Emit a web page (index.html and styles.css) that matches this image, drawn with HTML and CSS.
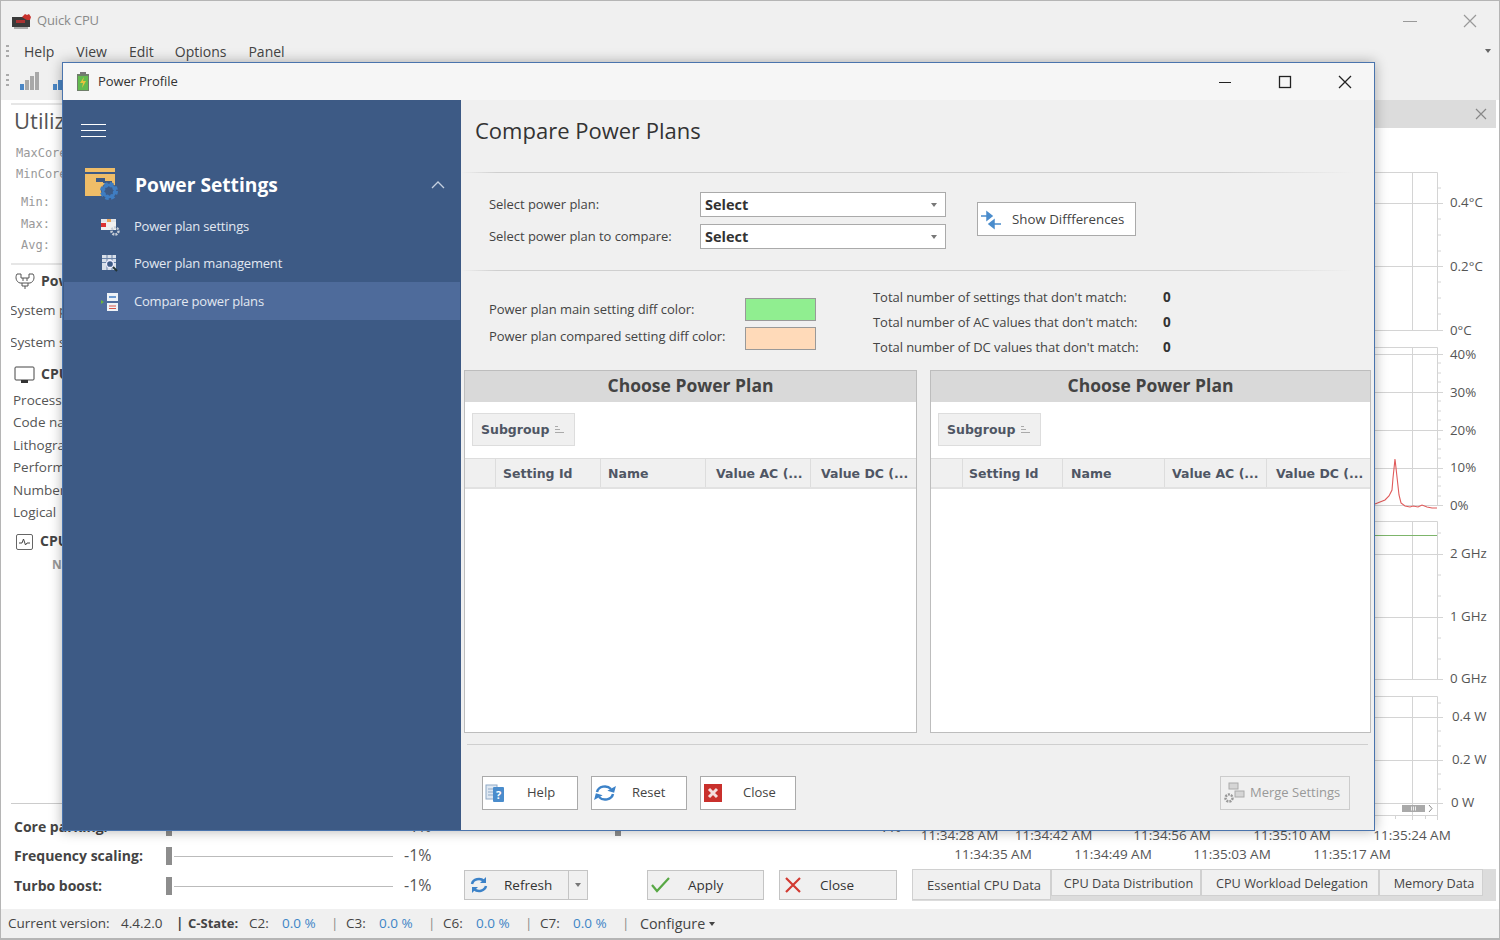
FILE: index.html
```html
<!DOCTYPE html>
<html lang="en">
<head>
<meta charset="utf-8">
<title>Quick CPU - Power Profile</title>
<link rel="stylesheet" href="styles.css">
</head>
<body>
<div class="app">
  <header class="titlebar">
    <svg class="logo" width="22" height="18" viewBox="0 0 22 18"><rect x="1" y="5" width="18" height="10" fill="#3a3a3a"/><path d="M11 5l3-3 2 1 2-1 2 3-1 3-3 0-2-1z" fill="#c8322d"/><rect x="5" y="8" width="9" height="3" fill="#a33"/><rect x="3" y="15" width="14" height="2" fill="#aaa"/></svg>
    <span class="app-name">Quick CPU</span>
    <span class="spacer"></span>
    <svg class="win-ctl" width="14" height="14" viewBox="0 0 14 14"><path d="M0 7.5h14" stroke="#999" fill="none"/></svg>
    <svg class="win-ctl close-ctl" width="14" height="14" viewBox="0 0 14 14"><path d="M1 1l12 12M13 1L1 13" stroke="#999" stroke-width="1.2" fill="none"/></svg>
  </header>
  <nav class="menubar">
    <span class="grip"></span>
    <span class="menu">Help</span><span class="menu">View</span><span class="menu m-edit">Edit</span><span class="menu">Options</span><span class="menu">Panel</span>
    <span class="spacer"></span><span class="bar-caret"></span>
  </nav>
  <div class="toolbar">
    <span class="grip"></span>
    <svg width="20" height="20" viewBox="0 0 20 20"><rect x="0" y="13" width="4" height="6" fill="#4a86c5"/><rect x="5" y="9" width="4" height="10" fill="#a8a8a8"/><rect x="10" y="5" width="4" height="14" fill="#a8a8a8"/><rect x="15" y="1" width="4" height="18" fill="#a8a8a8"/></svg>
    <svg class="tool2" width="20" height="20" viewBox="0 0 20 20"><rect x="0" y="13" width="4" height="6" fill="#4a86c5"/><rect x="5" y="9" width="4" height="10" fill="#4a86c5"/><rect x="10" y="5" width="4" height="14" fill="#a8a8a8"/></svg>
  </div>

  <main class="work">
    <section class="left-col">
      <div class="info">
        <div class="util-box">
          <div class="util-title">Utilization</div>
          <div class="mono mono-a">MaxCore:</div>
          <div class="mono mono-b">MinCore:</div>
          <div class="mono mono-c">Min:</div>
          <div class="mono mono-c">Max:</div>
          <div class="mono mono-c">Avg:</div>
        </div>
        <div class="sec-head sec-power">
          <svg width="22" height="18" viewBox="0 0 22 18"><path d="M3 2h4v4h8V2h4c2 3 1 8-3 9H6C2 10 1 5 3 2z" fill="none" stroke="#555"/><path d="M8 11v3h6v-3M11 14v3M9 6v3M13 6v3" fill="none" stroke="#555"/></svg>
          <b>Power</b>
        </div>
        <div class="row row-sys">System power</div>
        <div class="row row-sys">System state</div>
        <div class="sec-head sec-cpu">
          <svg width="22" height="18" viewBox="0 0 22 18"><rect x="1" y="1" width="19" height="13" rx="1" fill="#fff" stroke="#444"/><rect x="7" y="14" width="7" height="3" fill="#333"/></svg>
          <b>CPU</b>
        </div>
        <div class="row row-cpu">Processor</div>
        <div class="row row-cpu">Code name</div>
        <div class="row row-cpu">Lithography</div>
        <div class="row row-cpu">Performance</div>
        <div class="row row-cpu">Number</div>
        <div class="row row-cpu">Logical</div>
        <div class="sec-head sec-cpu2">
          <svg width="20" height="18" viewBox="0 0 20 18"><rect x="1.500" y="1.500" width="16" height="15" rx="1.500" fill="#fff" stroke="#666"/><path d="M4 10h3l1.500-4 2 6 1.500-2h3" fill="none" stroke="#444"/></svg>
          <b>CPU</b>
        </div>
        <div class="row-name">Name</div>
      </div>
      <div class="controls">
        <div class="ctl-row ctl-first">
          <b class="ctl-label">Core parking:</b>
          <span class="slider"><i class="thumb"></i><i class="track"></i></span><span class="ctl-val">-1%</span>
          <b class="perf-label">Performance:</b>
          <span class="slider slider-b"><i class="thumb"></i><i class="track"></i></span><span class="ctl-val">-1%</span>
        </div>
        <div class="ctl-row">
          <b class="ctl-label">Frequency scaling:</b>
          <span class="slider"><i class="thumb"></i><i class="track"></i></span><span class="ctl-val">-1%</span>
        </div>
        <div class="ctl-row">
          <b class="ctl-label">Turbo boost:</b>
          <span class="slider"><i class="thumb"></i><i class="track"></i></span><span class="ctl-val">-1%</span>
          <div class="actions">
            <div class="act act-refresh">
              <span class="act-main">
                <svg width="18" height="18" viewBox="0 0 18 18"><path d="M2 8a7 6 0 0 1 12-3" fill="none" stroke="#3c82c8" stroke-width="2.500"/><path d="M16 1v6h-6z" fill="#3c82c8"/><path d="M16 10a7 6 0 0 1-12 3" fill="none" stroke="#3c82c8" stroke-width="2.500"/><path d="M2 17v-6h6z" fill="#3c82c8"/></svg>
                <span class="act-text">Refresh</span>
              </span>
              <span class="act-drop"><i class="caret"></i></span>
            </div>
            <div class="act act-apply">
              <svg width="22" height="18" viewBox="0 0 22 18"><path d="M2 9l5 6L19 2" fill="none" stroke="#58a845" stroke-width="2.200"/></svg>
              <span class="act-text">Apply</span>
            </div>
            <div class="act act-close">
              <svg width="18" height="18" viewBox="0 0 18 18"><path d="M2 2l14 14M16 2L2 16" fill="none" stroke="#d23a32" stroke-width="2.200"/></svg>
              <span class="act-text">Close</span>
            </div>
          </div>
        </div>
      </div>
    </section>

    <section class="right-col">
      <div class="chart-head">
        <svg width="12" height="12" viewBox="0 0 12 12"><path d="M1 1l10 10M11 1L1 11" stroke="#888" stroke-width="1.200" fill="none"/></svg>
      </div>
      <svg class="chart" width="588" height="738" viewBox="912 128 588 738">
        <g class="grid">
          <path d="M1000 172.500H1437.500V330.500H1000M1412.500 172V330"/>
          <path d="M1000 203.500H1443M1000 266.500H1443M1437 330.500H1443"/>
          <path d="M1000 347.500H1437.500V505.500H1000M1412.500 347V505"/>
          <path d="M1000 354.500H1443M1000 392.500H1443M1000 430.500H1443M1000 468.500H1443M1000 505.500H1443"/>
          <path d="M1000 521.500H1437.500V679.500H1000M1412.500 521V679"/>
          <path d="M1000 554.500H1443M1000 617.500H1443M1437 679.500H1443"/>
          <path d="M1000 696.500H1437.500V803.500H1000M1412.500 696V815"/>
          <path d="M1000 717.500H1443M1000 760.500H1443M1437 803.500H1443"/>
          <path d="M1000 815.500H1437.500M1437.500 803V820M1395.500 815V819M1412.500 815V820M1425.500 815V819"/>
        </g>
        <path class="minor" d="M1437 188h4M1437 219h4M1437 235h4M1437 251h4M1437 282h4M1437 298h4M1437 314h4M1437 363h4M1437 373h4M1437 382h4M1437 401h4M1437 411h4M1437 420h4M1437 439h4M1437 449h4M1437 458h4M1437 477h4M1437 486h4M1437 496h4M1437 533h4M1437 575h4M1437 596h4M1437 638h4M1437 659h4M1437 703h4M1437 731h4M1437 746h4M1437 774h4M1437 789h4"/>
        <path class="green" d="M1000 535.500H1437"/>
        <path class="red" d="M1375 504l5-2 5-2 4-4 3-6 1-12 2-19 2 18 2 18 2 8 4 3 5 1 3-1 5 1 4-2 5 2 5 1h5"/>
        <rect class="sb-thumb" x="1402" y="805" width="23" height="7"/>
        <path class="sb-lines" d="M1411.500 806.500v4M1413.500 806.500v4M1415.500 806.500v4"/>
        <path class="sb-arrow" d="M1429 805l3 3.500-3 3.500"/>
        <g class="axis">
          <text x="1450" y="207">0.4°C</text><text x="1450" y="271">0.2°C</text><text x="1450" y="335">0°C</text>
          <text x="1450" y="359">40%</text><text x="1450" y="397">30%</text><text x="1450" y="435">20%</text><text x="1450" y="472">10%</text><text x="1450" y="510">0%</text>
          <text x="1450" y="558">2 GHz</text><text x="1450" y="621">1 GHz</text><text x="1450" y="683">0 GHz</text>
          <text x="1452" y="721">0.4 W</text><text x="1452" y="764">0.2 W</text><text x="1451" y="807">0 W</text>
        </g>
        <g class="times">
          <text x="959.500" y="840">11:34:28 AM</text><text x="1053.500" y="840">11:34:42 AM</text><text x="1172" y="840">11:34:56 AM</text><text x="1292" y="840">11:35:10 AM</text><text x="1412" y="840">11:35:24 AM</text>
          <text x="993" y="859">11:34:35 AM</text><text x="1113" y="859">11:34:49 AM</text><text x="1232" y="859">11:35:03 AM</text><text x="1352" y="859">11:35:17 AM</text>
        </g>
      </svg>
      <div class="tabs">
        <span class="tab tab-on">Essential CPU Data</span>
        <span class="tab tab-b">CPU Data Distribution</span>
        <span class="tab tab-c">CPU Workload Delegation</span>
        <span class="tab tab-d">Memory Data</span>
      </div>
    </section>
  </main>

  <footer class="status">
    <span class="st-cur">Current version:</span><span class="st-ver">4.4.2.0</span>
    <b class="st-bar">|</b><b class="st-cs">C-State:</b>
    <span class="st-k">C2:</span><span class="st-v">0.0 %</span><span class="st-sep">|</span>
    <span class="st-k">C3:</span><span class="st-v">0.0 %</span><span class="st-sep">|</span>
    <span class="st-k">C6:</span><span class="st-v">0.0 %</span><span class="st-sep">|</span>
    <span class="st-k">C7:</span><span class="st-v">0.0 %</span><span class="st-sep st-last">|</span>
    <span class="st-conf">Configure</span><i class="caret caret-dark"></i>
  </footer>
</div>

<div class="dialog">
  <header class="dlg-title">
    <svg width="14" height="20" viewBox="0 0 14 20"><rect x="4" y="0" width="6" height="3" fill="#777"/><rect x="1" y="2" width="12" height="17" fill="#6f7f6a"/><rect x="2" y="4" width="10" height="14" fill="#63bb4f"/><path d="M8 5L4 11h3l-1 5 4-7H7z" fill="#e8c43c"/></svg>
    <span class="dlg-name">Power Profile</span>
    <span class="spacer"></span>
    <svg class="dlg-btn" width="14" height="14" viewBox="0 0 14 14"><path d="M1 7.500h12" stroke="#222" fill="none"/></svg>
    <svg class="dlg-btn" width="14" height="14" viewBox="0 0 14 14"><rect x="1.500" y="1.500" width="11" height="11" stroke="#222" stroke-width="1.300" fill="none"/></svg>
    <svg class="dlg-btn" width="14" height="14" viewBox="0 0 14 14"><path d="M1 1l12 12M13 1L1 13" stroke="#222" stroke-width="1.300" fill="none"/></svg>
  </header>
  <div class="dlg-body">
    <aside class="side">
      <div class="burger"><i></i><i></i><i></i></div>
      <div class="side-head">
        <svg width="38" height="36" viewBox="0 0 38 36"><rect x="1" y="1" width="30" height="28" fill="#efbd68"/><rect x="1" y="5" width="30" height="2" fill="#3d5a85"/><rect x="12" y="11" width="9" height="4" fill="#3d5a85"/><path d="M19 15h8v6" fill="none" stroke="#3d5a85" stroke-width="2"/><circle cx="25" cy="24" r="8" fill="#3d5a85"/><circle cx="25" cy="24" r="6.500" fill="none" stroke="#3f7dc2" stroke-width="5" stroke-dasharray="3 2.100"/><circle cx="25" cy="24" r="6" fill="none" stroke="#3f7dc2" stroke-width="2.500"/></svg>
        <span class="side-title">Power Settings</span>
        <span class="spacer"></span>
        <svg class="chev" width="14" height="8" viewBox="0 0 14 8"><path d="M1 7l6-6 6 6" fill="none" stroke="#c5d0e0" stroke-width="1.300"/></svg>
      </div>
      <div class="side-item">
        <svg width="20" height="20" viewBox="0 0 20 20"><rect x="1" y="2" width="15" height="11" fill="#f0f0f0"/><rect x="1" y="2" width="15" height="3" fill="#e0e4ea"/><rect x="1" y="6" width="5" height="4" fill="#d33"/><rect x="7" y="2" width="4" height="3" fill="#e9a35a"/><circle cx="15" cy="14" r="3.500" fill="none" stroke="#c5ccd6" stroke-width="2.500" stroke-dasharray="2 1"/></svg>
        <span>Power plan settings</span>
      </div>
      <div class="side-item">
        <svg width="20" height="20" viewBox="0 0 20 20"><rect x="2" y="1" width="14" height="15" fill="#d8dfe9"/><path d="M2 4.500h14M2 8.500h14M7 1v15M12 1v15" stroke="#6a83a8"/><circle cx="10" cy="10" r="3.500" fill="#3d5a85" stroke="#eef" stroke-width="1.300"/><path d="M13 13l4 4" stroke="#233" stroke-width="2"/></svg>
        <span>Power plan management</span>
      </div>
      <div class="side-item side-on">
        <svg width="20" height="20" viewBox="0 0 20 20"><rect x="7" y="1" width="11" height="8" fill="#eef2f7"/><rect x="9" y="4" width="7" height="2" fill="#6d9ad0"/><rect x="7" y="11" width="11" height="8" fill="#eef2f7"/><path d="M9 14h7M9 16.500h7" stroke="#d8564a"/><path d="M1 8l3 2-3 2z" fill="#6bb33c"/></svg>
        <span>Compare power plans</span>
      </div>
    </aside>
    <div class="pane">
      <h1 class="pane-title">Compare Power Plans</h1>
      <div class="rule"></div>
      <div class="select-form">
        <div class="select-grid">
          <label class="flabel">Select power plan:</label>
          <div class="combo"><b>Select</b><i class="caret"></i></div>
          <label class="flabel">Select power plan to compare:</label>
          <div class="combo"><b>Select</b><i class="caret"></i></div>
        </div>
        <div class="btn btn-diff">
          <svg width="22" height="20" viewBox="0 0 22 20"><path d="M1 6h8M7 2l5 4-5 4z" fill="#4a8ccc" stroke="#4a8ccc" stroke-width="1.500"/><path d="M21 14h-9M14 10l-5 4 5 4z" fill="#4a8ccc" stroke="#4a8ccc" stroke-width="1.500"/></svg>
          <span>Show Diffferences</span>
        </div>
      </div>
      <div class="rule"></div>
      <div class="diff-row">
        <div class="swatches">
          <span class="flabel fl-up">Power plan main setting diff color:</span><i class="swatch sw-green"></i>
          <span class="flabel fl-down">Power plan compared setting diff color:</span><i class="swatch sw-peach"></i>
        </div>
        <div class="totals">
          <span class="flabel">Total number of settings that don't match:</span><b>0</b>
          <span class="flabel">Total number of AC values that don't match:</span><b>0</b>
          <span class="flabel">Total number of DC values that don't match:</span><b>0</b>
        </div>
      </div>
      <div class="panels">
        <section class="plan plan-l">
          <h2 class="plan-head">Choose Power Plan</h2>
          <div class="group-area"><span class="chip">Subgroup<svg width="11" height="10" viewBox="0 0 11 10"><path d="M1 1.500h3M1 4.500h5M1 7.500h9" stroke="#aaa" fill="none"/></svg></span></div>
          <div class="cols">
            <span></span><span>Setting Id</span><span>Name</span><span>Value AC (...</span><span>Value DC (...</span>
          </div>
        </section>
        <section class="plan plan-r">
          <h2 class="plan-head">Choose Power Plan</h2>
          <div class="group-area"><span class="chip">Subgroup<svg width="11" height="10" viewBox="0 0 11 10"><path d="M1 1.500h3M1 4.500h5M1 7.500h9" stroke="#aaa" fill="none"/></svg></span></div>
          <div class="cols">
            <span></span><span>Setting Id</span><span>Name</span><span>Value AC (...</span><span>Value DC (...</span>
          </div>
        </section>
      </div>
      <div class="rule rule-foot"></div>
      <div class="foot">
        <div class="btn btn-foot">
          <svg width="22" height="22" viewBox="0 0 22 22"><rect x="1" y="3" width="11" height="14" fill="#dfe8f2" stroke="#8fa9c6"/><path d="M3 7h7M3 10h7M3 13h7" stroke="#8fa9c6"/><rect x="8" y="5" width="11" height="15" rx="1" fill="#4a8ccc"/><text class="q" x="13.500" y="16.500">?</text></svg>
          <span>Help</span>
        </div>
        <div class="btn btn-foot btn-reset">
          <svg width="22" height="20" viewBox="0 0 22 20"><path d="M3 9a8 7 0 0 1 14-3" fill="none" stroke="#3c82c8" stroke-width="2.500"/><path d="M21 2v7h-7z" fill="#3c82c8" transform="rotate(15 18 6)"/><path d="M19 11a8 7 0 0 1-14 3" fill="none" stroke="#3c82c8" stroke-width="2.500"/><path d="M1 18v-7h7z" fill="#3c82c8" transform="rotate(15 4 14)"/></svg>
          <span>Reset</span>
        </div>
        <div class="btn btn-foot">
          <svg width="20" height="20" viewBox="0 0 20 20"><rect x="1" y="1" width="18" height="18" fill="#c9302c"/><path d="M6 6l8 8M14 6l-8 8" stroke="#f4dede" stroke-width="3"/></svg>
          <span>Close</span>
        </div>
        <span class="spacer"></span>
        <div class="btn btn-merge">
          <svg width="22" height="22" viewBox="0 0 22 22"><rect x="6" y="1" width="9" height="6" fill="#d5d5d5" stroke="#aaa"/><rect x="12" y="9" width="9" height="6" fill="#d5d5d5" stroke="#aaa"/><circle cx="6" cy="16" r="3.500" fill="none" stroke="#999" stroke-width="2.500" stroke-dasharray="2 1"/></svg>
          <span>Merge Settings</span>
        </div>
      </div>
    </div>
  </div>
</div>
</body>
</html>
```

FILE: styles.css
```css
* { box-sizing: border-box; }
html, body { margin: 0; padding: 0; }
body {
  width: 1500px; height: 940px; overflow: hidden; position: relative;
  background: #f0f0f0; color: #444;
  font: 13px/1.2 "Open Sans", "Noto Sans", sans-serif;
}
i { display: block; font-style: normal; }
.spacer { flex: 1; }

.app {
  width: 1500px; height: 940px; display: flex; flex-direction: column;
  border: 1px solid #b5b5b5; border-width: 1px 1px 2px 1px;
}
.titlebar { height: 39px; display: flex; align-items: center; padding-left: 10px; }
.logo { margin-right: 4px; }
.app-name { font-size: 13px; letter-spacing: -.15px; color: #8a8a8a; }
.win-ctl { margin-right: 22px; }
.close-ctl { margin-left: 24px; margin-right: 22px; }

.menubar { height: 24px; display: flex; align-items: center; padding-left: 5px; }
.grip { width: 3px; height: 14px; margin-right: 15px; background: repeating-linear-gradient(#aaa 0 2px, transparent 2px 5px); }
.menu { font-size: 14px; color: #444; margin-right: 22px; }
.m-edit { margin-right: 21px; }
.bar-caret { width: 0; height: 0; margin-right: 8px; border: 3px solid transparent; border-top: 4px solid #666; }

.toolbar { height: 36px; display: flex; align-items: center; padding-left: 5px; padding-bottom: 2px; }
.toolbar .grip { margin-right: 11px; }
.tool2 { margin-left: 13px; }

.work { flex: 1; display: flex; background: #fff; }
.left-col { width: 911px; display: flex; flex-direction: column; }
.info { height: 704px; margin-left: 10px; border-bottom: 1px solid #ccc; overflow: hidden; color: #444; }
.util-box { margin: 3px 0 0 -2px; height: 162px; width: 300px; padding-left: 3px; border: 2px solid #e6e6e6; }
.util-title { font-size: 22px; line-height: 30px; color: #555; }
.mono { font: 12px/16px "DejaVu Sans Mono", monospace; color: #999; margin-left: 2px; }
.mono-a { margin-top: 10px; }
.mono-b { margin-top: 5px; }
.mono-c { margin: 5.500px 0 0 7px; }
.mono-b + .mono-c { margin-top: 12px; }
.sec-head { display: flex; align-items: center; gap: 5px; height: 20px; margin-left: 3px; color: #444; font-size: 14px; }
.sec-power { margin-top: 6px; }
.sec-cpu { margin-top: 11px; }
.sec-cpu2 { margin-top: 8px; margin-left: 4px; }
.row { height: 22.500px; line-height: 22.500px; color: #555; font-size: 13.500px; }
.row-sys { margin-top: 8px; margin-left: -1px; }
.row-sys + .row-sys { margin-top: 9.500px; }
.row-cpu { margin-left: 2px; }
.sec-cpu + .row-cpu { margin-top: 4px; }
.row-name { margin: 6px 0 0 41px; color: #999; font-weight: 700; font-size: 12px; }

.controls { padding: 6px 0 0 13px; }
.ctl-row { height: 30px; display: flex; align-items: center; }
.ctl-row > * { flex: none; }
.ctl-first { height: 31px; padding-top: 3px; }
.ctl-label { width: 152px; font-size: 14px; color: #444; }
.slider { width: 227px; height: 18px; display: flex; align-items: center; }
.thumb { width: 6px; height: 18px; background: #8d8d8d; }
.track { flex: 1; height: 1px; background: #bbb; margin-left: 2px; }
.ctl-val { margin-left: 11px; font-size: 16px; width: 50px; color: #555; }
.perf-label { width: 150px; margin-left: 6px; }
.slider-b { width: 248px; margin-left: 5px; }
.actions { display: flex; margin: -2px 0 0 10px; height: 30px; }
.act { height: 30px; border: 1px solid #c4c4c4; background: #f0f0f0; display: flex; align-items: center; color: #333; font-size: 13.500px; }
.act-main { display: flex; align-items: center; flex: 1; height: 100%; padding-left: 5px; }
.act-refresh { width: 124px; }
.act-refresh .act-text { margin-left: 16px; }
.act-drop { width: 19px; height: 100%; border-left: 1px solid #c4c4c4; display: flex; align-items: center; justify-content: center; }
.act-apply { width: 117px; margin-left: 59px; padding-left: 2px; }
.act-apply .act-text { margin-left: 16px; }
.act-close { width: 118px; margin-left: 15px; padding-left: 4px; }
.act-close .act-text { margin-left: 18px; }
.caret { width: 0; height: 0; border: 3.500px solid transparent; border-top: 4px solid #777; border-bottom: 0; }
.caret-dark { border-top-color: #444; margin-left: 4px; }

.right-col { flex: 1; display: flex; flex-direction: column; }
.chart-head { height: 28px; margin-right: 4px; background: #dcdcdc; display: flex; align-items: center; justify-content: flex-end; padding-right: 9px; }
.chart { display: block; }
.grid path { fill: none; stroke: #d4d4d4; stroke-width: 1; }
.minor { fill: none; stroke: #d4d4d4; }
.green { fill: none; stroke: #7db56b; }
.red { fill: none; stroke: #e05a5a; stroke-width: 1.100; }
.sb-thumb { fill: #a9a9a9; }
.sb-lines { stroke: #eee; fill: none; }
.sb-arrow { fill: none; stroke: #888; }
.axis text { font-size: 13.300px; fill: #555; }
.times text { font-size: 13.500px; fill: #555; text-anchor: middle; }
.tabs { height: 32px; margin: 3px 4px 0 0; background: #dcdcdc; display: flex; align-items: flex-start; }
.tab { height: 27px; line-height: 27px; padding-left: 4px; background: #f0f0f0; border: 1px solid #d0d0d0; text-align: center; color: #444; font-size: 12.700px; }
.tab-on { width: 139px; height: 31px; line-height: 30px; font-size: 13px; padding-left: 5px; }
.tab-b { width: 150px; padding-left: 5px; }
.tab-c { width: 178px; }
.tab-d { width: 104px; padding-left: 6px; }

.status { height: 29px; display: flex; align-items: center; padding-left: 7px; background: #f0f0f0; font-size: 13.500px; color: #444; }
.status > * { flex: none; }
.st-cur { width: 113px; }
.st-ver { width: 55px; }
.st-bar { width: 12px; }
.st-cs { width: 61px; font-size: 13px; }
.st-k { width: 33px; }
.st-v { width: 49px; color: #3d85c6; }
.st-sep { width: 15px; color: #888; }
.st-last { width: 18px; }
.st-conf { font-size: 14.300px; }

.dialog {
  position: absolute; left: 62px; top: 62px; width: 1313px; height: 769px;
  display: flex; flex-direction: column; background: #f0f0f0;
  border: 1px solid #4a74ad; box-shadow: 0 0 12px rgba(0,0,0,.3);
}
.dlg-title { height: 37px; flex: none; display: flex; align-items: center; padding: 1px 0 0 13px; background: #f6f6f6; }
.dlg-name { margin-left: 8px; font-size: 13px; color: #333; letter-spacing: -.1px; }
.dlg-btn { margin-right: 46px; }
.dlg-btn:last-child { margin-right: 22px; }
.dlg-body { flex: 1; display: flex; min-height: 0; }

.side { width: 398px; flex: none; background: #3d5a85; color: #e2e8f1; }
.burger { height: 60px; padding: 24px 0 0 18px; }
.burger i { width: 25px; height: 1px; background: #fff; margin-bottom: 5px; }
.side-head { height: 47px; display: flex; align-items: center; padding: 3px 16px 0 21px; }
.side-title { margin-left: 13px; font-size: 19.200px; font-weight: 700; color: #fff; }
.side-item { height: 37.500px; display: flex; align-items: center; padding: 2px 0 0 36px; margin: 0 1px; font-size: 13px; letter-spacing: -.2px; }
.side-item span { margin-left: 14px; }
.side-on { background: #4e6b9b; }

.pane { flex: 1; min-width: 0; display: flex; flex-direction: column; }
.pane-title { margin: 0; height: 72px; padding: 12px 0 0 14px; font-size: 22px; font-weight: 400; line-height: 36px; color: #333; }
.rule { height: 1px; flex: none; margin: 0 20px 0 0; background: linear-gradient(90deg, transparent, #cfcfcf 4%, #cfcfcf 85%, transparent); }
.select-form { height: 97px; display: flex; padding: 19px 0 0 28px; }
.select-grid { display: grid; grid-template-columns: 211px 246px; grid-auto-rows: 25px; row-gap: 7px; align-items: center; }
.flabel { color: #444; font-size: 13px; letter-spacing: -.05px; white-space: nowrap; }
.combo { height: 25px; background: #fff; border: 1px solid #aaa; display: flex; align-items: center; justify-content: space-between; padding: 0 8px 0 4px; color: #333; font-size: 14.500px; }
.btn { display: flex; align-items: center; background: #fff; border: 1px solid #aaa; color: #444; font-size: 13px; }
.btn-diff { width: 159px; height: 34px; margin: 10px 0 0 31px; padding: 1px 0 0 2px; font-size: 13.300px; }
.btn-diff span { margin-left: 10px; }
.diff-row { height: 99px; display: flex; padding-left: 28px; }
.swatches { width: 327px; height: 60px; margin-top: 27px; display: grid; grid-template-columns: 256px 71px; grid-auto-rows: 23px; row-gap: 6px; align-items: center; }
.fl-up { margin-top: 1px; }
.fl-down { margin-top: -3px; }
.swatch { width: 71px; height: 23px; border: 1px solid #999; }
.sw-green { background: #90ee90; }
.sw-peach { background: #ffdab9; }
.totals { margin: 14px 0 0 57px; display: grid; grid-template-columns: 290px auto; grid-auto-rows: 25px; align-items: center; }
.totals b { color: #333; font-size: 13.500px; }
.panels { display: flex; gap: 13px; margin-left: 3px; height: 363px; flex: none; }
.plan { background: #fff; border: 1px solid #bdbdbd; border-top: 0; display: flex; flex-direction: column; }
.plan-l { width: 453px; }
.plan-r { width: 441px; }
.plan-head { margin: 0; height: 32px; flex: none; background: #d9d9d9; border-top: 1px solid #bdbdbd; text-align: center; font-size: 17.500px; line-height: 29px; font-weight: 700; color: #444; }
.group-area { height: 56px; flex: none; padding: 11px 0 0 7px; }
.chip { display: inline-flex; align-items: center; gap: 5px; height: 33px; padding: 0 9px 0 8px; background: #f0f0f0; border: 1px solid #ddd; color: #4f5664; font: 700 12.500px "DejaVu Sans", sans-serif; }
.cols { height: 31px; flex: none; display: grid; background: #f0f0f0; border-top: 1px solid #ddd; border-bottom: 2px solid #e2e2e2; font: 700 12.500px/30px "DejaVu Sans", sans-serif; color: #4f5664; }
.plan-l .cols { grid-template-columns: 30px 105px 105px 105px 1fr; }
.plan-r .cols { grid-template-columns: 31px 100px 102px 102px 1fr; }
.cols span { padding-left: 7px; border-left: 1px solid #ddd; white-space: nowrap; overflow: hidden; }
.cols span:first-child { border-left: 0; }
.plan-l .cols span:nth-child(n+4) { padding-left: 10px; }
.plan-r .cols span:nth-child(2) { padding-left: 6px; }
.plan-r .cols span:nth-child(3) { padding-left: 8px; }
.plan-r .cols span:nth-child(4) { padding-left: 7px; }
.plan-r .cols span:nth-child(5) { padding-left: 9px; }
.rule-foot { margin: 11px 6px 0 6px; background: #cfcfcf; }
.foot { display: flex; margin-top: 31px; padding: 0 24px 0 21px; }
.btn-foot { width: 96px; height: 34px; margin-right: 13px; padding-left: 2px; position: relative; }
.btn-foot span { margin-left: 20px; }
.btn-reset span { margin-left: 16px; }
.btn-merge { width: 130px; height: 34px; background: #f0f0f0; border-color: #ccc; color: #999; padding-left: 2px; }
.btn-merge span { margin-left: 5px; }
.q { font: 700 11px "Open Sans", sans-serif; fill: #fff; text-anchor: middle; }
```
